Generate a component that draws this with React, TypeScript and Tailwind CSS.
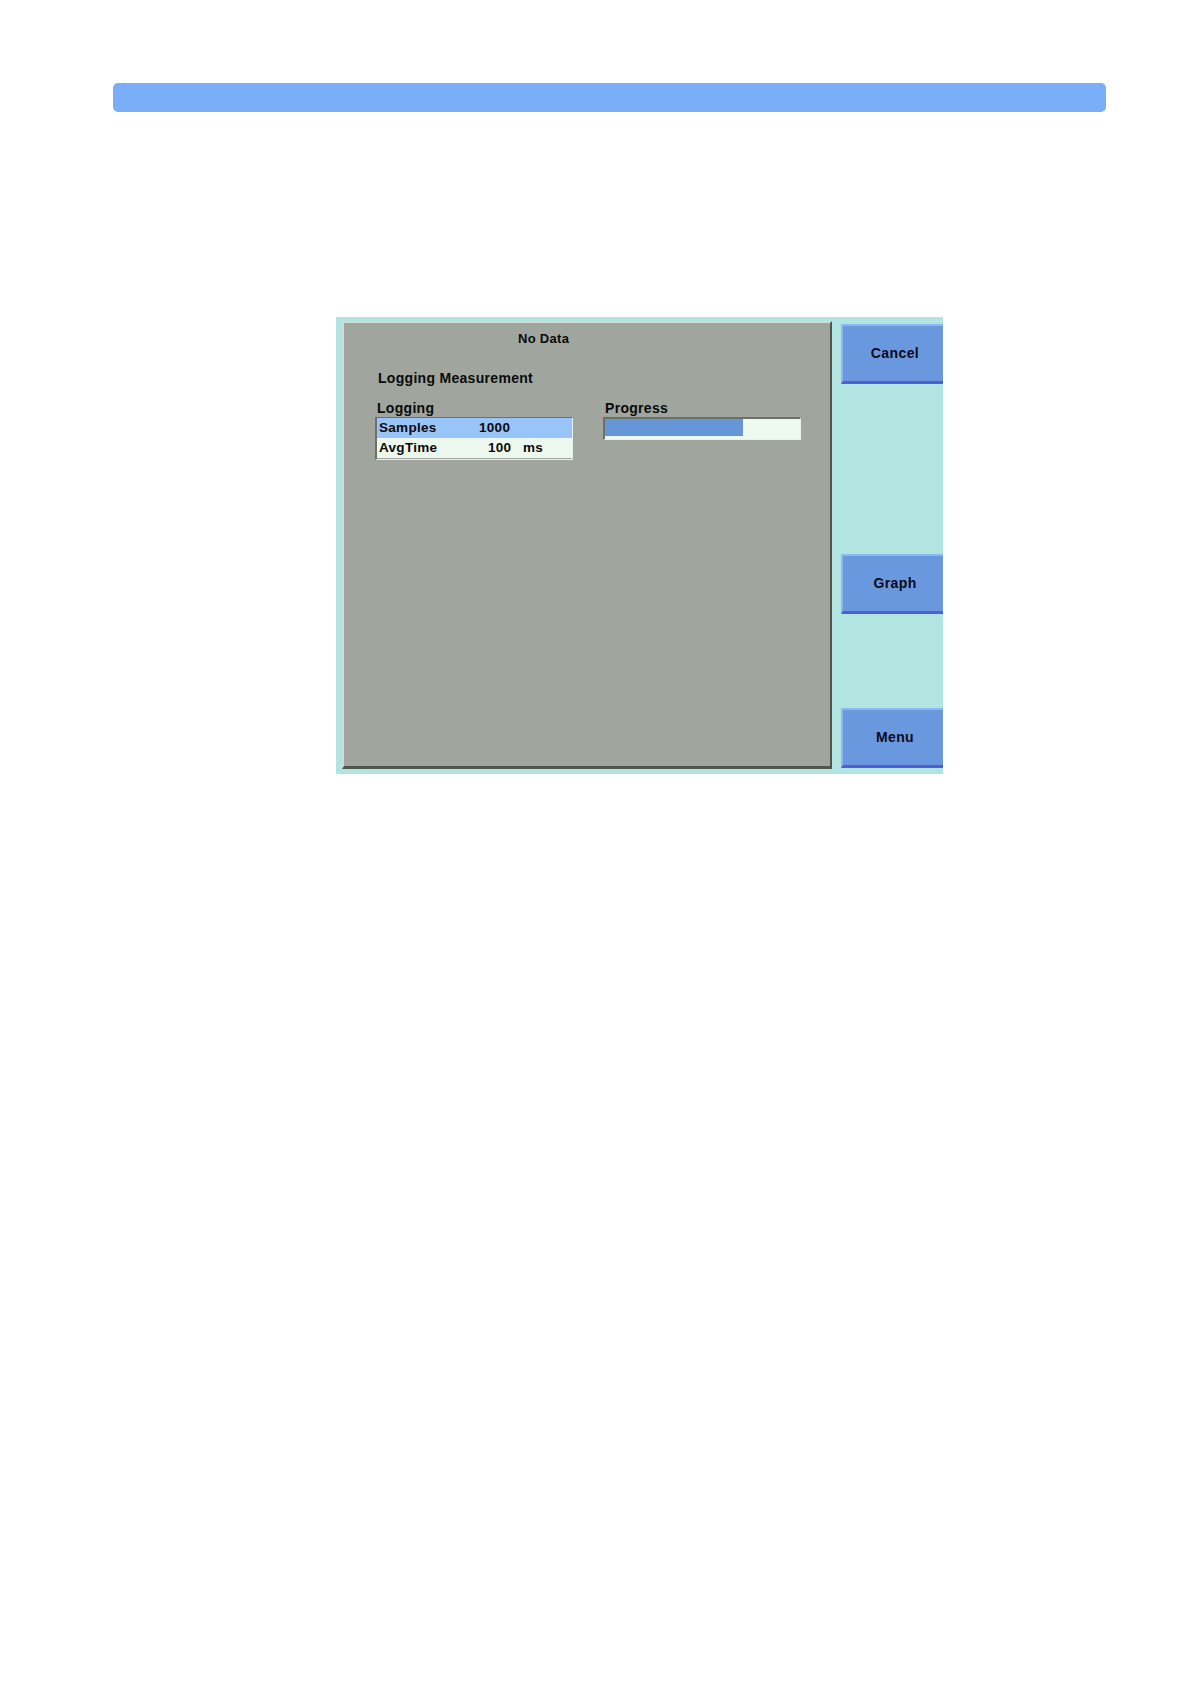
import React from 'react';

const font = { fontFamily: '"Liberation Sans", Arial, sans-serif' };

// Soft key on the right side of the instrument screen
function SoftKey({ label, className = '' }: { label: string; className?: string }) {
  return (
    <div
      className={`h-[60px] w-[102px] flex items-center justify-center bg-[#6a98de] border-t-2 border-l-2 border-b-[3px] border-t-[#8cb8f4] border-l-[#8cb8f4] border-b-[#4d5fd6] text-[14px] font-bold tracking-[0.4px] text-[#0a0a1a] ${className}`}
    >
      <span className="ml-[4px]">{label}</span>
    </div>
  );
}

export default function App() {
  return (
    <div className="min-h-[1682px] w-[1190px] bg-white pt-[83px]" style={font}>
      {/* header bar */}
      <div className="ml-[113px] h-[29px] w-[993px] rounded-[5px] bg-[#7aaef8]" />

      {/* instrument screen */}
      <div className="ml-[336px] mt-[205px] flex h-[457px] w-[607px] overflow-hidden bg-[#b2e4e2]">
        {/* gray display area */}
        <div className="ml-[6px] mt-[4px] h-[448px] w-[490px] bg-[#a0a69e] border-t-2 border-l-2 border-r-2 border-b-[3px] border-t-[#d2dcd2] border-l-[#d2dcd2] border-r-[#505650] border-b-[#505650] text-[#0a0a0a] tracking-[0.3px]">
          <div className="ml-[174px] mt-[8px] h-[16px] text-[13px] font-bold leading-[16px]">No Data</div>

          <div className="ml-[34px] mt-[22px] h-[18px] text-[14px] font-bold leading-[18px]">
            Logging Measurement
          </div>

          <div className="mt-[12px] flex">
            {/* logging table */}
            <div className="ml-[31px] w-[198px]">
              <div className="ml-[2px] h-[18px] text-[14px] font-bold leading-[18px]">Logging</div>
              <div className="h-[43px] w-[198px] border-t border-l-2 border-b border-r border-t-[#6a706a] border-l-[#6a706a] border-b-[#e8f0e8] border-r-[#e8f0e8] text-[13.5px] font-bold">
                <div className="flex h-[20px] items-center bg-[#98c4f8]">
                  <span className="ml-[2px] w-[100px]">Samples</span>
                  <span>1000</span>
                </div>
                <div className="flex h-[20px] items-center bg-[#ecf8ee]">
                  <span className="ml-[2px] w-[109px]">AvgTime</span>
                  <span className="w-[35px]">100</span>
                  <span>ms</span>
                </div>
              </div>
            </div>

            {/* progress */}
            <div className="ml-[30px] w-[198px]">
              <div className="ml-[2px] h-[18px] text-[14px] font-bold leading-[18px]">Progress</div>
              <div className="h-[23px] w-[198px] border-t-2 border-l-2 border-b border-r border-t-[#6a706a] border-l-[#6a706a] border-b-[#e8f0e8] border-r-[#e8f0e8] bg-[#eefaf0]">
                <div className="h-[17px] w-[138px] bg-[#6496d8]" />
              </div>
            </div>
          </div>
        </div>

        {/* soft keys */}
        <div className="ml-[9px] flex flex-col pt-[7px]">
          <SoftKey label="Cancel" />
          <SoftKey label="Graph" className="mt-[170px]" />
          <SoftKey label="Menu" className="mt-[94px]" />
        </div>
      </div>
    </div>
  );
}
